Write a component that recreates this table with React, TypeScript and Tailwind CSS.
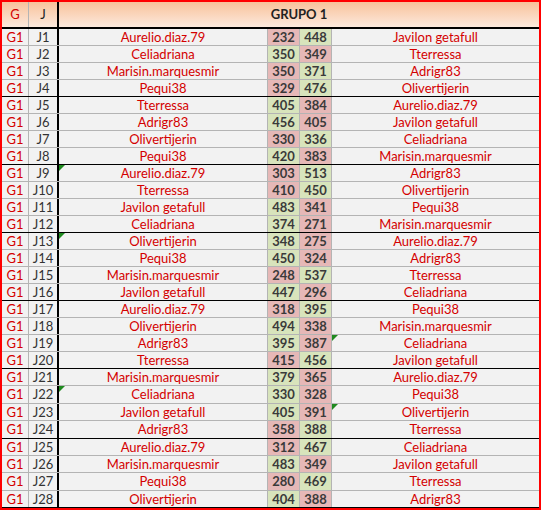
import React from 'react';

type Match = { j: number; home: string; a: number; b: number; away: string; markHome?: boolean; markAway?: boolean };

const matches: Match[] = [
  { j: 1, home: 'Aurelio.diaz.79', a: 232, b: 448, away: 'Javilon getafull' },
  { j: 2, home: 'Celiadriana', a: 350, b: 349, away: 'Tterressa' },
  { j: 3, home: 'Marisin.marquesmir', a: 350, b: 371, away: 'Adrigr83' },
  { j: 4, home: 'Pequi38', a: 329, b: 476, away: 'Olivertijerin' },
  { j: 5, home: 'Tterressa', a: 405, b: 384, away: 'Aurelio.diaz.79' },
  { j: 6, home: 'Adrigr83', a: 456, b: 405, away: 'Javilon getafull' },
  { j: 7, home: 'Olivertijerin', a: 330, b: 336, away: 'Celiadriana' },
  { j: 8, home: 'Pequi38', a: 420, b: 383, away: 'Marisin.marquesmir' },
  { j: 9, home: 'Aurelio.diaz.79', a: 303, b: 513, away: 'Adrigr83', markHome: true },
  { j: 10, home: 'Tterressa', a: 410, b: 450, away: 'Olivertijerin' },
  { j: 11, home: 'Javilon getafull', a: 483, b: 341, away: 'Pequi38' },
  { j: 12, home: 'Celiadriana', a: 374, b: 271, away: 'Marisin.marquesmir' },
  { j: 13, home: 'Olivertijerin', a: 348, b: 275, away: 'Aurelio.diaz.79', markHome: true },
  { j: 14, home: 'Pequi38', a: 450, b: 324, away: 'Adrigr83' },
  { j: 15, home: 'Marisin.marquesmir', a: 248, b: 537, away: 'Tterressa' },
  { j: 16, home: 'Javilon getafull', a: 447, b: 296, away: 'Celiadriana' },
  { j: 17, home: 'Aurelio.diaz.79', a: 318, b: 395, away: 'Pequi38' },
  { j: 18, home: 'Olivertijerin', a: 494, b: 338, away: 'Marisin.marquesmir' },
  { j: 19, home: 'Adrigr83', a: 395, b: 387, away: 'Celiadriana', markAway: true },
  { j: 20, home: 'Tterressa', a: 415, b: 456, away: 'Javilon getafull' },
  { j: 21, home: 'Marisin.marquesmir', a: 379, b: 365, away: 'Aurelio.diaz.79' },
  { j: 22, home: 'Celiadriana', a: 330, b: 328, away: 'Pequi38', markHome: true },
  { j: 23, home: 'Javilon getafull', a: 405, b: 391, away: 'Olivertijerin', markAway: true },
  { j: 24, home: 'Adrigr83', a: 358, b: 388, away: 'Tterressa' },
  { j: 25, home: 'Aurelio.diaz.79', a: 312, b: 467, away: 'Celiadriana' },
  { j: 26, home: 'Marisin.marquesmir', a: 483, b: 349, away: 'Javilon getafull' },
  { j: 27, home: 'Pequi38', a: 280, b: 469, away: 'Tterressa' },
  { j: 28, home: 'Olivertijerin', a: 404, b: 388, away: 'Adrigr83' },
];

// a few rows in the sheet are a pixel taller
const tallRows = [22, 24, 27];

const Mark = () => (
  <svg className="absolute left-0 top-0" width="6" height="6" viewBox="0 0 6 6">
    <polygon points="0,0 6,0 0,6" fill="#1f8a1f" />
  </svg>
);

const score = (v: number, other: number) =>
  v > other ? 'bg-[#d8e4bc]' : 'bg-[#e6b8b7]';

const App: React.FC = () => {
  return (
    <div
      className="w-[541px] h-[510px] border-2 border-[#ff0000] bg-[#f2f2f2] text-[13px] leading-none overflow-hidden"
      style={{ fontFamily: 'Lato, "Liberation Sans", sans-serif' }}
    >
      <div className="flex h-[27px] border-b-2 border-black bg-gradient-to-b from-[#f8c29a] to-[#fce9dd]">
        <div className="w-[27px] border-r border-[#b4b4b4] flex items-center justify-center text-[#d40000]">G</div>
        <div className="w-[30px] border-r-2 border-black flex items-center justify-center text-[#222]">J</div>
        <div className="flex-1 flex items-center justify-center font-bold text-[#222]">GRUPO 1</div>
      </div>

      {matches.map((m) => {
        const groupEnd = m.j % 4 === 0;
        const h = tallRows.includes(m.j) ? 'h-[18px]' : 'h-[17px]';
        return (
          <div
            key={m.j}
            className={`flex ${h} border-b ${groupEnd ? 'border-black' : 'border-[#b4b4b4]'}`}
          >
            <div className="w-[27px] border-r border-[#b4b4b4] flex items-center justify-center text-[#d40000]">G1</div>
            <div className="w-[30px] border-r-2 border-black flex items-center justify-center text-[#333]">J{m.j}</div>
            <div className="relative w-[209px] border-r border-[#b4b4b4] flex items-center justify-center text-[#d40000]">
              {m.markHome && <Mark />}
              {m.home}
            </div>
            <div className={`w-[32px] border-r border-[#b4b4b4] flex items-center justify-center font-bold text-[#3a3a3a] ${score(m.a, m.b)}`}>{m.a}</div>
            <div className={`w-[32px] border-r border-[#b4b4b4] flex items-center justify-center font-bold text-[#3a3a3a] ${score(m.b, m.a)}`}>{m.b}</div>
            <div className="relative flex-1 flex items-center justify-center text-[#d40000]">
              {m.markAway && <Mark />}
              {m.away}
            </div>
          </div>
        );
      })}
    </div>
  );
};

export default App;
